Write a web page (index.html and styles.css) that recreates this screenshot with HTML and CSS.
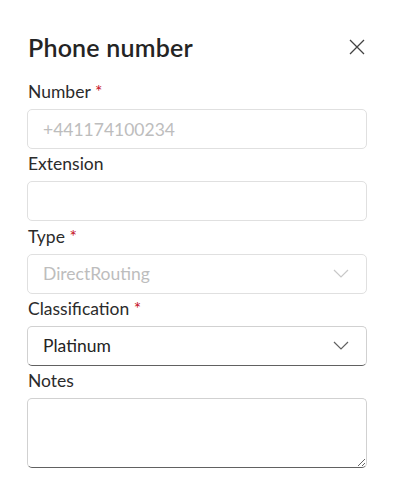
FILE: index.html
```html
<!DOCTYPE html>
<html lang="en">
<head>
<meta charset="utf-8">
<title>Phone number</title>
<link rel="stylesheet" href="styles.css">
</head>
<body>
<div class="panel">
  <div class="header">
    <h1 class="title">Phone number</h1>
    <button class="close" aria-label="Close">
      <svg width="16" height="16" viewBox="0 0 16 16"><path d="M1 1 L15 15 M15 1 L1 15" stroke="#424242" stroke-width="1.3" fill="none"/></svg>
    </button>
  </div>
  <form class="form">
    <div class="field">
      <label class="label">Number <span class="req">*</span></label>
      <input class="control disabled" type="text" placeholder="+441174100234" disabled>
    </div>
    <div class="field">
      <label class="label">Extension</label>
      <input class="control plain" type="text">
    </div>
    <div class="field">
      <label class="label">Type <span class="req">*</span></label>
      <div class="control select disabled">
        <span class="value muted">DirectRouting</span>
        <svg class="chev" width="16" height="9" viewBox="0 0 16 9"><path d="M1 1 L8 8 L15 1" stroke="#c8c8c8" stroke-width="1.2" fill="none"/></svg>
      </div>
    </div>
    <div class="field">
      <label class="label">Classification <span class="req">*</span></label>
      <div class="control select active">
        <span class="value">Platinum</span>
        <svg class="chev" width="16" height="9" viewBox="0 0 16 9"><path d="M1 1 L8 8 L15 1" stroke="#616161" stroke-width="1.2" fill="none"/></svg>
      </div>
    </div>
    <div class="field">
      <label class="label">Notes</label>
      <textarea class="control notes"></textarea>
    </div>
  </form>
</div>
</body>
</html>
```

FILE: styles.css
```css
* { box-sizing: border-box; }
html, body { margin: 0; padding: 0; background: #ffffff; }
body {
  font-family: Lato, "Noto Sans", "Liberation Sans", sans-serif;
  color: #242424;
}
.panel {
  padding: 29px 28px 0 27px;
}
.header {
  display: flex;
  align-items: center;
  justify-content: space-between;
  height: 36px;
}
.title {
  margin: 0;
  font-size: 25px;
  font-weight: 600;
  line-height: 36px;
  letter-spacing: 0.2px;
  padding-left: 1px;
  color: #242424;
}
.close {
  border: 0;
  background: none;
  padding: 0;
  width: 16px;
  height: 16px;
  margin-right: 2px;
  display: flex;
}
.form {
  display: flex;
  flex-direction: column;
  gap: 2.25px;
  margin-top: 14px;
}
.field {
  display: flex;
  flex-direction: column;
}
.label {
  font-size: 17.5px;
  line-height: 25px;
  margin-bottom: 5px;
  padding-left: 1px;
  color: #2b2b2b;
}
.req { color: #c50f1f; }
.control {
  height: 40px;
  width: 100%;
  border: 1px solid #e0e0e0;
  border-radius: 5px;
  background: #ffffff;
  font-family: inherit;
  font-size: 17.5px;
  color: #242424;
  padding: 0 15px;
  outline: none;
}
.control::placeholder { color: #bdbdbd; }
.control.disabled { background: #ffffff; }
.select {
  display: flex;
  align-items: center;
  justify-content: space-between;
}
.select .chev { margin-right: 2px; }
.value.muted { color: #bdbdbd; }
.active {
  border-color: #d1d1d1;
  border-bottom-color: #616161;
}
.notes {
  height: 70px;
  border-color: #d1d1d1;
  border-bottom-color: #616161;
  resize: both;
  padding: 8px 15px;
}
```
